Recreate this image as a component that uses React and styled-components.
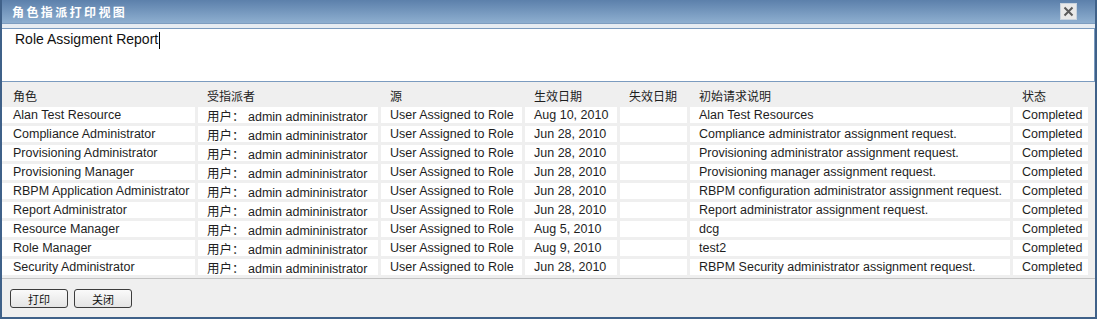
import React from "react";
import styled, { createGlobalStyle } from "styled-components";

const GlobalStyle = createGlobalStyle`
  html, body {
    margin: 0;
    padding: 0;
    background: #ffffff;
  }
  body {
    font-family: "Liberation Sans", Arial, "Noto Sans CJK SC", sans-serif;
    font-size: 12.5px;
    color: #1e1e1e;
  }
`;

const Frame = styled.div`
  width: 1097px;
  height: 319px;
  box-sizing: border-box;
  border: 2px solid #3f6189;
  border-top: none;
  display: flex;
  flex-direction: column;
  background: #efefef;
  overflow: hidden;
`;

const TitleBar = styled.div`
  height: 24px;
  box-sizing: border-box;
  margin: 0 -2px;
  padding: 0 20px 0 12px;
  display: flex;
  align-items: center;
  justify-content: space-between;
  background: linear-gradient(to bottom, #5c80ab, #8eafd0);
  border-bottom: 1px solid #7d9dc0;
`;

const Title = styled.span`
  color: #ffffff;
  font-family: "Noto Sans CJK SC", sans-serif;
  font-weight: bold;
  font-size: 12px;
  letter-spacing: 2.4px;
`;

const CloseButton = styled.div`
  width: 15px;
  height: 15px;
  background: #e9e9e9;
  border: 1px solid #c9d3de;
  display: flex;
  align-items: center;
  justify-content: center;
`;

const Strip = styled.div`
  height: 4px;
  background: #e6ecf2;
`;

const TextBox = styled.div`
  height: 54px;
  box-sizing: border-box;
  background: #ffffff;
  border: 1px solid #7b9bbf;
  border-left: none;
  padding: 2px 0 0 13px;
  font-size: 14px;
  color: #111;
  display: flex;
  align-items: flex-start;
`;

const Caret = styled.span`
  display: inline-block;
  width: 1px;
  height: 17px;
  background: #000;
  margin-left: 1px;
  margin-top: 1px;
`;

const Table = styled.div`
  display: flex;
  flex-direction: column;
  gap: 3px;
  padding: 5px 0 3px 0;
  border-bottom: 1px solid #c4c4c4;
`;

const Row = styled.div`
  display: grid;
  grid-template-columns: 193px 180px 141px 92px 67px 320px 75px;
  column-gap: 3px;
  height: ${(p) => (p.$header ? "17px" : "16px")};
`;

const Cell = styled.div`
  display: flex;
  align-items: center;
  padding-left: ${(p) => (p.$first ? "11px" : "9px")};
  background: ${(p) => (p.$header ? "transparent" : "#ffffff")};
  white-space: nowrap;
  overflow: hidden;
  font-family: ${(p) =>
    p.$cjk
      ? '"Noto Sans CJK SC", sans-serif'
      : '"Liberation Sans", Arial, "Noto Sans CJK SC", sans-serif'};
  font-size: ${(p) => (p.$cjk ? "12px" : "12.5px")};
`;

const Footer = styled.div`
  flex: 1;
  display: flex;
  gap: 6px;
  padding: 10px 0 0 8px;
  align-items: flex-start;
`;

const Button = styled.button`
  width: 58px;
  height: 19px;
  box-sizing: border-box;
  border: 1px solid #3c3c3c;
  border-radius: 3px;
  background: linear-gradient(to bottom, #fafafa, #e4e4e4);
  font-family: "Noto Sans CJK SC", sans-serif;
  font-size: 11px;
  color: #111;
  padding: 0;
  display: flex;
  align-items: center;
  justify-content: center;
`;

const headers = ["角色", "受指派者", "源", "生效日期", "失效日期", "初始请求说明", "状态"];

const rows = [
  ["Alan Test Resource", "Aug 10, 2010", "Alan Test Resources"],
  ["Compliance Administrator", "Jun 28, 2010", "Compliance administrator assignment request."],
  ["Provisioning Administrator", "Jun 28, 2010", "Provisioning administrator assignment request."],
  ["Provisioning Manager", "Jun 28, 2010", "Provisioning manager assignment request."],
  ["RBPM Application Administrator", "Jun 28, 2010", "RBPM configuration administrator assignment request."],
  ["Report Administrator", "Jun 28, 2010", "Report administrator assignment request."],
  ["Resource Manager", "Aug 5, 2010", "dcg"],
  ["Role Manager", "Aug 9, 2010", "test2"],
  ["Security Administrator", "Jun 28, 2010", "RBPM Security administrator assignment request."],
];

export default function App() {
  return (
    <>
      <GlobalStyle />
      <Frame>
        <TitleBar>
          <Title>角色指派打印视图</Title>
          <CloseButton>
            <svg width="11" height="11" viewBox="0 0 11 11">
              <path d="M1.5 1.5 L9.5 9.5 M9.5 1.5 L1.5 9.5" stroke="#5a5a5a" strokeWidth="2" />
            </svg>
          </CloseButton>
        </TitleBar>
        <Strip />
        <TextBox>
          Role Assigment Report
          <Caret />
        </TextBox>
        <Table>
          <Row $header>
            {headers.map((h, i) => (
              <Cell key={i} $header $cjk $first={i === 0}>
                {h}
              </Cell>
            ))}
          </Row>
          {rows.map(([role, date, desc], i) => (
            <Row key={i}>
              <Cell $first>{role}</Cell>
              <Cell>用户： admin admininistrator</Cell>
              <Cell>User Assigned to Role</Cell>
              <Cell>{date}</Cell>
              <Cell />
              <Cell>{desc}</Cell>
              <Cell>Completed</Cell>
            </Row>
          ))}
        </Table>
        <Footer>
          <Button>打印</Button>
          <Button>关闭</Button>
        </Footer>
      </Frame>
    </>
  );
}
